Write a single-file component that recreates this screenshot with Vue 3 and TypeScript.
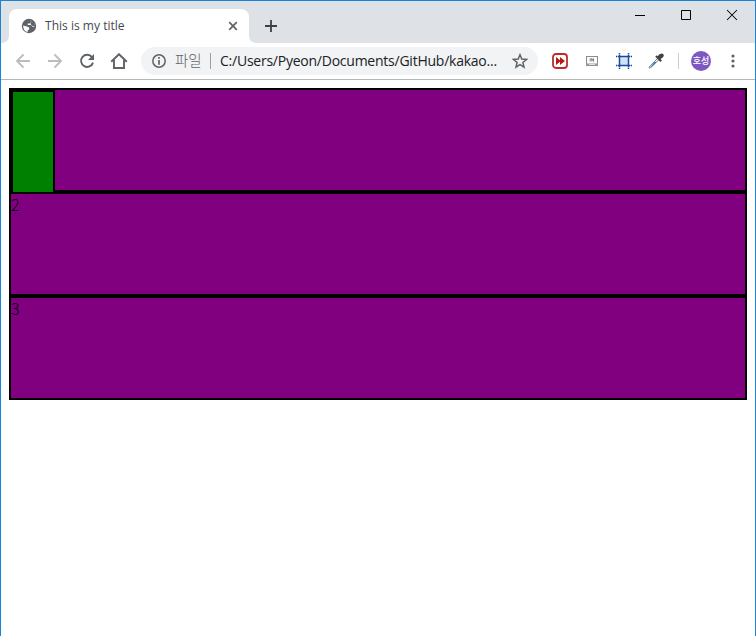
<script setup lang="ts">
interface Row {
  id: number
  label: string
}

const title = 'This is my title'
const address = 'C:/Users/Pyeon/Documents/GitHub/kakao...'
const rows: Row[] = [
  { id: 1, label: '' },
  { id: 2, label: '2' },
  { id: 3, label: '3' },
]
</script>

<template>
  <div class="window">
    <header class="tabstrip">
      <svg class="corner" width="8" height="8" viewBox="0 0 8 8">
        <path d="M8 0Q8 8 0 8H8z" fill="#fff" />
      </svg>
      <div class="tab">
        <svg class="globe" width="16" height="16" viewBox="0 0 16 16">
          <circle cx="8" cy="8" r="7.2" fill="#5f6368" />
          <path d="M2.2 7.4 5.1 8.3 8.2 9.4v2.1l-1.5.8v1.6C4 13.4 2 11 2.2 7.4z" fill="#fff" />
          <path d="M7.2 2.3h2.9v2L8.6 5.4H6.7v1.7h3.5l1.4 1.7h1.1l1.2-.6C13.8 4.5 11 2.1 7.2 2.3z" fill="#fff" />
          <path d="M10.6 1.9 13.3 4.6 14.2 8.3 11.7 8 9.4 6.1 10 4.8z" fill="#5f6368" />
        </svg>
        <span class="title">{{ title }}</span>
        <svg class="close" width="10" height="10" viewBox="0 0 10 10">
          <path d="M1.2 1.2 8.8 8.8M8.8 1.2 1.2 8.8" stroke="#5f6368" stroke-width="1.7" />
        </svg>
      </div>
      <svg class="corner" width="8" height="8" viewBox="0 0 8 8">
        <path d="M0 0Q0 8 8 8H0z" fill="#fff" />
      </svg>
      <svg class="plus" width="12" height="12" viewBox="0 0 12 12">
        <path d="M6 0v12M0 6h12" stroke="#3c4043" stroke-width="1.8" />
      </svg>
      <div class="controls">
        <svg width="46" height="28" viewBox="0 0 46 28"><path d="M18 14.5h10" stroke="#000" /></svg>
        <svg width="46" height="28" viewBox="0 0 46 28"><path d="M18.5 9.5h9v9h-9z" fill="none" stroke="#000" /></svg>
        <svg width="46" height="28" viewBox="0 0 46 28"><path d="m18 9 10 10M28 9 18 19" fill="none" stroke="#000" stroke-width="1.05" /></svg>
      </div>
    </header>

    <nav class="toolbar">
      <div class="nav">
        <svg width="16" height="16" viewBox="0 0 16 16" fill="none" stroke="#babcbe" stroke-width="1.8"><path d="M15 8H2.5M8.5 1.5 2 8 8.5 14.5" /></svg>
        <svg width="16" height="16" viewBox="0 0 16 16" fill="none" stroke="#babcbe" stroke-width="1.8"><path d="M1 8h12.5M7.5 1.5 14 8 7.5 14.5" /></svg>
        <svg width="16" height="16" viewBox="0 0 16 16">
          <path d="M13 4.1A6.1 6.1 0 1 0 14 9.6" fill="none" stroke="#5f6368" stroke-width="1.9" />
          <path d="M15 1v6H9z" fill="#5f6368" />
        </svg>
        <svg width="18" height="16" viewBox="0 0 18 16"><path d="M1.2 8.7 9 1.2l7.8 7.5M4 7v8h10V7" fill="none" stroke="#5f6368" stroke-width="1.9" /></svg>
      </div>
      <div class="omnibox">
        <svg class="info" width="14" height="14" viewBox="0 0 14 14">
          <circle cx="7" cy="7" r="6.2" fill="none" stroke="#5f6368" stroke-width="1.5" />
          <path d="M7 3.1v1.6M7 6v4.7" stroke="#5f6368" stroke-width="1.7" />
        </svg>
        <span class="scheme">파일</span>
        <span class="divider"></span>
        <span class="address">{{ address }}</span>
        <svg class="star" width="16" height="16" viewBox="0 0 16 16">
          <path d="m8 1.8 1.8 4.3 4.7.4-3.6 3 1.1 4.6L8 11.6l-4 2.5 1.1-4.6-3.6-3 4.7-.4z" fill="none" stroke="#5f6368" stroke-width="1.5" />
        </svg>
      </div>
      <div class="extensions">
        <svg width="16" height="16" viewBox="0 0 16 16">
          <rect x="1" y="1" width="14" height="14" rx="3" fill="#fff" stroke="#c02a2a" stroke-width="1.8" />
          <path d="M4 4 8 7.2V4l5 4-5 4V8.8L4 12z" fill="#b91616" />
        </svg>
        <svg width="16" height="16" viewBox="0 0 16 16">
          <rect x="2.5" y="3.5" width="11" height="9" fill="#fafafa" stroke="#8b8b8b" />
          <path d="M2 11.5h12" stroke="#999" stroke-width="2" />
          <path d="M5 11.5h6" stroke="#ddd" />
          <path d="M6.2 5.4v3M7.7 8.4v-3l1.8 3v-3" fill="none" stroke="#666" stroke-width=".8" />
        </svg>
        <svg width="16" height="16" viewBox="0 0 16 16">
          <rect x="3" y="3" width="10" height="10" fill="#cfe4fc" />
          <path d="M3.5 2v12M12.5 2v12M2 3.5h12M2 12.5h12" stroke="#174a9c" stroke-width="1.5" />
          <path d="M3.5 0v1.4M12.5 0v1.4M3.5 14.6V16M12.5 14.6V16M0 3.5h1.4M0 12.5h1.4M14.6 3.5H16M14.6 12.5H16" stroke="#174a9c" stroke-width="1.5" />
        </svg>
        <svg width="16" height="16" viewBox="0 0 16 16">
          <path d="m9.6 5.4-7.8 7.8-.8 1.9 2.1-.7L11 6.6" fill="#ddecf8" stroke="#888" />
          <path d="M6.6 9.1h1.9l-4.6 4.4-1.4.4z" fill="#2460d9" />
          <path d="m8 3 5.2 5.2M9.3 5.2l3.2-3.5" stroke="#454545" stroke-width="2.2" />
          <path d="M10 4.2 12.2 1Q14.2.1 15.3 1.2T15 4.2l-3 2.2z" fill="#424242" />
        </svg>
      </div>
      <span class="separator"></span>
      <span class="avatar">호성</span>
      <svg class="menu" width="4" height="14" viewBox="0 0 4 14" fill="#5f6368">
        <circle cx="2" cy="2" r="1.6" /><circle cx="2" cy="7" r="1.6" /><circle cx="2" cy="12" r="1.6" />
      </svg>
    </nav>

    <main class="page">
      <section v-for="row in rows" :key="row.id" class="row">
        <div v-if="row.id === 1" class="child"></div>
        <template v-else>{{ row.label }}</template>
      </section>
    </main>
  </div>
</template>

<style>
body { margin: 0; background: #fff; }
</style>

<style scoped>
.window {
  box-sizing: border-box;
  width: 756px;
  height: 636px;
  border: 1px solid #1883d7;
  border-bottom: 0;
  overflow: hidden;
  background: #fff;
  font-family: "Noto Sans", "Noto Sans CJK KR", sans-serif;
}
svg { display: block; flex: none; }
.tabstrip { display: flex; height: 42px; background: #dee1e6; align-items: flex-end; }
.tab {
  box-sizing: border-box;
  display: flex;
  align-items: center;
  width: 240px;
  height: 34px;
  padding: 0 11px 0 12px;
  border-radius: 8px 8px 0 0;
  background: #fff;
}
.title { margin-left: 8px; font: 12px/16px "Open Sans", sans-serif; letter-spacing: 0.02px; color: #45494d; white-space: nowrap; }
.close { margin-left: auto; }
.plus { margin: 0 0 11px 8px; }
.controls { display: flex; align-self: flex-start; margin-left: auto; }
.toolbar {
  box-sizing: border-box;
  display: flex;
  align-items: center;
  height: 37px;
  padding-left: 14px;
  border-bottom: 1px solid #b6b6b6;
}
.nav { display: flex; gap: 16px; width: 126px; }
.nav svg:last-child { margin-left: -1px; }
.omnibox {
  box-sizing: border-box;
  display: flex;
  align-items: center;
  width: 397px;
  height: 28px;
  padding: 0 10px 0 11px;
  border-radius: 14px;
  background: #f1f3f4;
}
.scheme { width: 28px; margin-left: 9px; font: 300 14.5px/20px "Noto Sans CJK KR", sans-serif; color: #5f6368; white-space: nowrap; transform: translateY(-1px); }
.divider { width: 1px; height: 16px; margin-left: 7px; background: #9aa0a6; }
.address { width: 278px; margin-left: 9px; font: 14px/20px "Open Sans", sans-serif; letter-spacing: -0.24px; color: #202124; white-space: nowrap; }
.star { margin-left: auto; }
.extensions { display: flex; gap: 16px; margin-left: 14px; }
.separator { width: 1px; height: 16px; margin-left: 14px; background: #cbcdd0; }
.avatar {
  width: 20px;
  height: 20px;
  margin-left: 12px;
  border-radius: 50%;
  background: #7e57c2;
  color: #fff;
  font: 500 9px/20px "Noto Sans CJK KR", sans-serif;
  text-align: center;
  white-space: nowrap;
}
.menu { margin-left: 20px; }
.page { padding: 8px; color: #000; font: 300 16px/20px "Noto Sans CJK KR", sans-serif; }
.row { box-sizing: border-box; height: 104px; border: 2px solid #000; background: purple; }
.child { width: 40px; height: 100px; border: 2px solid #000; background: green; }
</style>
